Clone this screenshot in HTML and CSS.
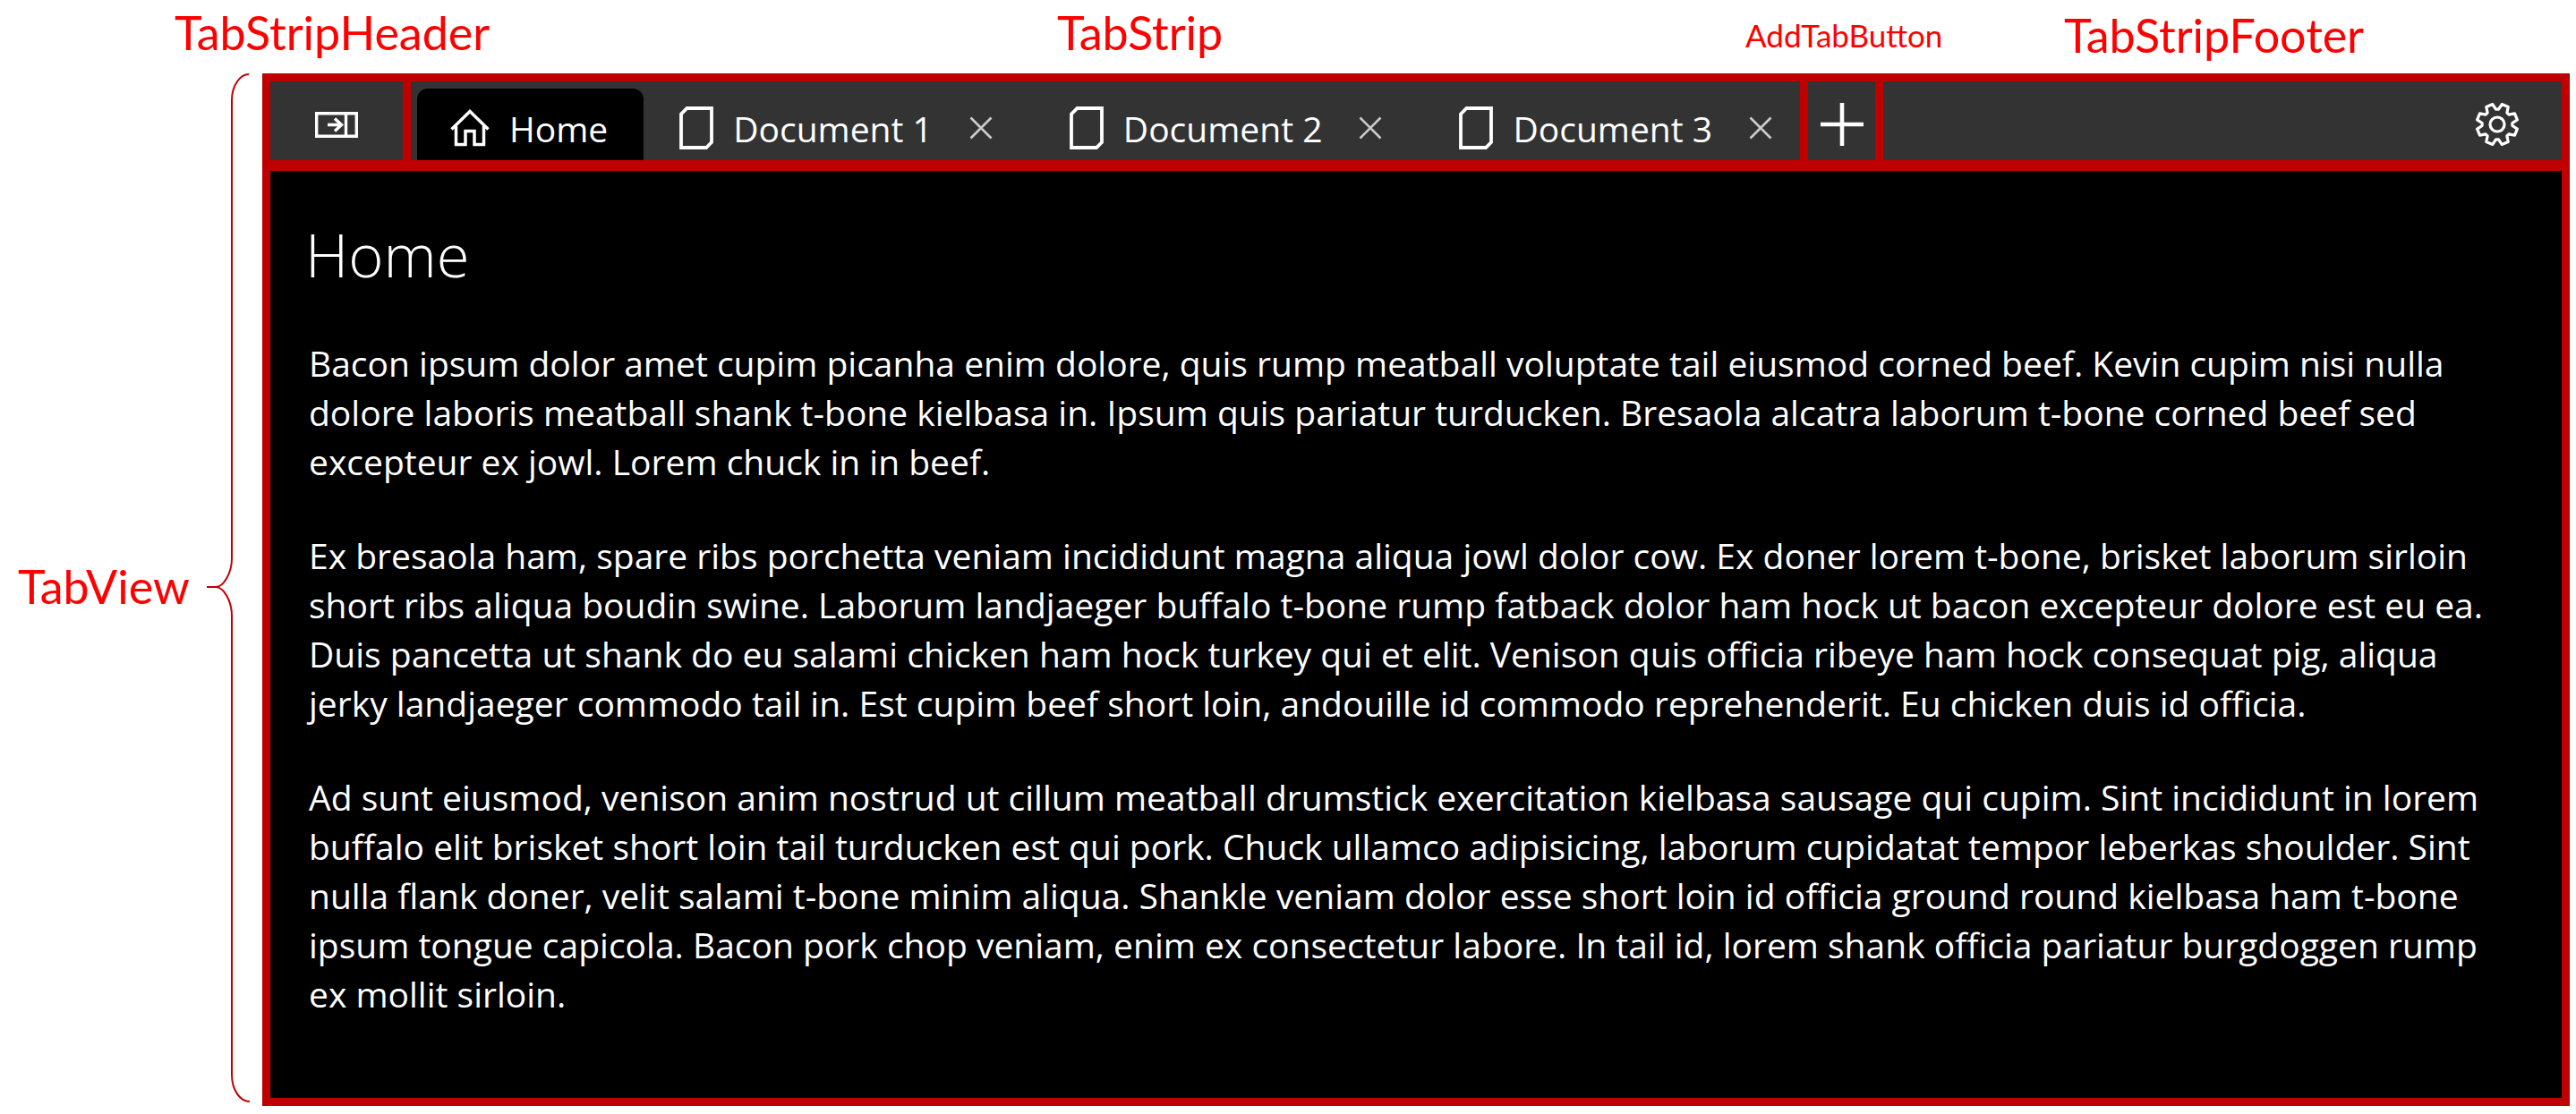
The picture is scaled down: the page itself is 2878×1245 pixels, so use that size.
FILE: index.html
```html
<!DOCTYPE html>
<html lang="en">
<head>
  <meta charset="utf-8">
  <meta name="viewport" content="width=device-width, initial-scale=1">
  <title>TabView</title>
  <link rel="stylesheet" href="styles.css">
</head>
<body>
  <svg class="sprite" aria-hidden="true">
    <symbol id="icon-document" viewBox="0 0 38 48">
      <path d="M8.500 2H36V40L30 46H2V8.500Z" fill="none" stroke="currentColor" stroke-width="3.800"/>
    </symbol>
    <symbol id="icon-close" viewBox="0 0 26 26">
      <path d="M1.500 1.500L24.500 24.500M24.500 1.500L1.500 24.500" fill="none" stroke="currentColor" stroke-width="2.600"/>
    </symbol>
  </svg>

  <div class="page">
    <div class="callouts">
      <span class="callout">TabStripHeader</span>
      <span class="callout">TabStrip</span>
      <span class="callout callout-small">AddTabButton</span>
      <span class="callout callout-footer">TabStripFooter</span>
    </div>

    <div class="side">
      <span class="callout callout-view">TabView</span>
      <svg class="brace" viewBox="0 0 48 1150" preserveAspectRatio="none" aria-hidden="true">
        <path d="M47 1C37 1 28 14 28 30V542C28 558 19 574 10 574H0M10 574C19 574 28 590 28 606V1119C28 1136 37 1149 48 1149" fill="none" stroke="#c00000" stroke-width="2"/>
      </svg>
    </div>

    <main class="tab-view">
      <header class="strip">
        <div class="strip-header">
          <button class="icon-button" type="button" aria-label="Dock panel">
            <svg width="48" height="29" viewBox="0 0 48 29" fill="none" stroke="currentColor" stroke-width="3.400" aria-hidden="true">
              <path d="M1.700 1.700H46.300V27.300H1.700ZM34.500 1.500V27.500M14 14.500H29.500M22 7.500L29.500 14.500L22 21.500"/>
            </svg>
          </button>
        </div>

        <nav class="tabs" aria-label="Tabs">
          <div class="tab tab-active">
            <button class="tab-button" type="button" aria-current="page">
              <svg width="44" height="42" viewBox="0 0 44 42" fill="none" stroke="currentColor" stroke-width="3.500" aria-hidden="true">
                <path d="M1.500 22.500L22 2.500L42.500 22.500M6.500 19V39.500H17V24.500H27V39.500H37.500V19"/>
              </svg>
              Home
            </button>
          </div>
          <div class="tab tab-document">
            <button class="tab-button" type="button"><svg width="38" height="48" aria-hidden="true"><use href="#icon-document"/></svg>Document 1</button>
            <button class="tab-close" type="button" aria-label="Close Document 1"><svg width="26" height="26" aria-hidden="true"><use href="#icon-close"/></svg></button>
          </div>
          <div class="tab tab-document">
            <button class="tab-button" type="button"><svg width="38" height="48" aria-hidden="true"><use href="#icon-document"/></svg>Document 2</button>
            <button class="tab-close" type="button" aria-label="Close Document 2"><svg width="26" height="26" aria-hidden="true"><use href="#icon-close"/></svg></button>
          </div>
          <div class="tab tab-document">
            <button class="tab-button" type="button"><svg width="38" height="48" aria-hidden="true"><use href="#icon-document"/></svg>Document 3</button>
            <button class="tab-close" type="button" aria-label="Close Document 3"><svg width="26" height="26" aria-hidden="true"><use href="#icon-close"/></svg></button>
          </div>
        </nav>

        <div class="strip-add">
          <button class="icon-button" type="button" aria-label="Add tab">
            <svg width="48" height="48" viewBox="0 0 48 48" fill="none" stroke="currentColor" stroke-width="4.600" aria-hidden="true"><path d="M24 0V48M0 24H48"/></svg>
          </button>
        </div>

        <div class="strip-footer">
          <button class="icon-button" type="button" aria-label="Settings">
            <svg width="48" height="48" viewBox="0 0 48 48" fill="none" stroke="currentColor" stroke-width="3.200" stroke-linejoin="round" aria-hidden="true">
              <path d="M25.500 7.100L29.200 1.600L36.200 4.500L34.900 11L37 13.100L43.500 11.800L46.400 18.800L40.900 22.500V25.500L46.400 29.200L43.500 36.200L37 34.900L34.900 37L36.200 43.500L29.200 46.400L25.500 40.900H22.500L18.800 46.400L11.800 43.500L13.100 37L11 34.900L4.500 36.200L1.600 29.200L7.100 25.500V22.500L1.600 18.800L4.500 11.800L11 13.100L13.100 11L11.800 4.500L18.800 1.600L22.500 7.100Z"/>
              <circle cx="24" cy="24" r="8"/>
            </svg>
          </button>
        </div>
      </header>

      <article class="content">
        <h1>Home</h1>
        <p>Bacon ipsum dolor amet cupim picanha enim dolore, quis rump meatball voluptate tail eiusmod corned beef. Kevin cupim nisi nulla dolore laboris meatball shank t-bone kielbasa in. Ipsum quis pariatur turducken. Bresaola alcatra laborum t-bone corned beef sed excepteur ex jowl. Lorem chuck in in beef.</p>
        <p>Ex bresaola ham, spare ribs porchetta veniam incididunt magna aliqua jowl dolor cow. Ex doner lorem t-bone, brisket laborum sirloin short ribs aliqua boudin swine. Laborum landjaeger buffalo t-bone rump fatback dolor ham hock ut bacon excepteur dolore est eu ea. Duis pancetta ut shank do eu salami chicken ham hock turkey qui et elit. Venison quis officia ribeye ham hock consequat pig, aliqua jerky landjaeger commodo tail in. Est cupim beef short loin, andouille id commodo reprehenderit. Eu chicken duis id officia.</p>
        <p>Ad sunt eiusmod, venison anim nostrud ut cillum meatball drumstick exercitation kielbasa sausage qui cupim. Sint incididunt in lorem buffalo elit brisket short loin tail turducken est qui pork. Chuck ullamco adipisicing, laborum cupidatat tempor leberkas shoulder. Sint nulla flank doner, velit salami t-bone minim aliqua. Shankle veniam dolor esse short loin id officia ground round kielbasa ham t-bone ipsum tongue capicola. Bacon pork chop veniam, enim ex consectetur labore. In tail id, lorem shank officia pariatur burgdoggen rump ex mollit sirloin.</p>
      </article>
    </main>
  </div>
</body>
</html>
```
FILE: styles.css
```css
* {
  box-sizing: border-box;
}

body {
  margin: 0;
  background: #fff;
  color: #fff;
  font-family: "Open Sans", "Segoe UI", sans-serif;
  font-size: 39px;
  line-height: 55px;
}

svg {
  display: block;
  flex: none;
}

button {
  display: flex;
  align-items: center;
  margin: 0;
  padding: 0;
  border: 0;
  background: none;
  color: inherit;
  font: inherit;
  cursor: pointer;
}

.sprite {
  position: absolute;
  width: 0;
  height: 0;
}

.page {
  display: grid;
  grid-template-columns: 293px 1fr;
  grid-template-rows: 82px 1fr;
  min-height: 100vh;
  padding: 0 7px 11px 0;
}

/* Red annotations around the control */
.callouts {
  display: grid;
  grid-column: 1 / -1;
  grid-template-columns: 986px 769px 356px 1fr;
  align-items: start;
  padding: 4px 0 0 195px;
}

.callout {
  color: #f00;
  font-family: Lato, Calibri, sans-serif;
  font-size: 52px;
  line-height: 64px;
  white-space: nowrap;
}

.callout-small {
  padding-top: 3px;
  font-size: 35px;
}

.callout-footer {
  padding-top: 3px;
}

.side {
  display: flex;
  gap: 15px;
  padding: 0 14px 4px 20px;
}

.callout-view {
  flex: 1;
  align-self: center;
  padding-bottom: 4px;
}

.brace {
  width: 48px;
  height: 100%;
}

/* Tab view */
.tab-view {
  display: flex;
  flex-direction: column;
  min-width: 0;
  border: 9px solid #c00000;
  background: #000;
}

.strip {
  display: flex;
  height: 100px;
  border-bottom: 12px solid #c00000;
  background: #333;
}

.strip-header,
.strip-add,
.strip-footer {
  display: flex;
  align-items: center;
  justify-content: center;
  padding-top: 8px;
}

.strip-header,
.tabs,
.strip-add {
  flex: none;
  border-right: 9px solid #c00000;
}

.strip-header {
  width: 157px;
}

.strip-add {
  width: 84px;
}

.strip-footer {
  flex: 1;
  justify-content: flex-end;
  padding-right: 48px;
}

.tabs {
  display: flex;
  width: 1561px;
  padding: 8px 0 0 7px;
}

.tab {
  display: flex;
  flex: none;
  align-items: center;
  gap: 41px;
  padding: 8px 40px 0 37px;
  white-space: nowrap;
}

.tab-active {
  border-radius: 12px 12px 0 0;
  background: #000;
}

.tab-document {
  padding: 8px 16px 0 40px;
}

.tab-document + .tab-document {
  margin-left: 30px;
}

.tab-button {
  gap: 22px;
}

.tab-close {
  color: #ccc;
}

/* Tab content */
.content {
  flex: 1;
  padding: 47px 64px 86px 39px;
}

.content h1 {
  margin: 0 0 48px;
  font-size: 67px;
  font-weight: 300;
  line-height: 92px;
}

.content p {
  margin: 0 0 50px;
  padding-left: 4px;
}

.content p:last-child {
  margin-bottom: 0;
}
```
